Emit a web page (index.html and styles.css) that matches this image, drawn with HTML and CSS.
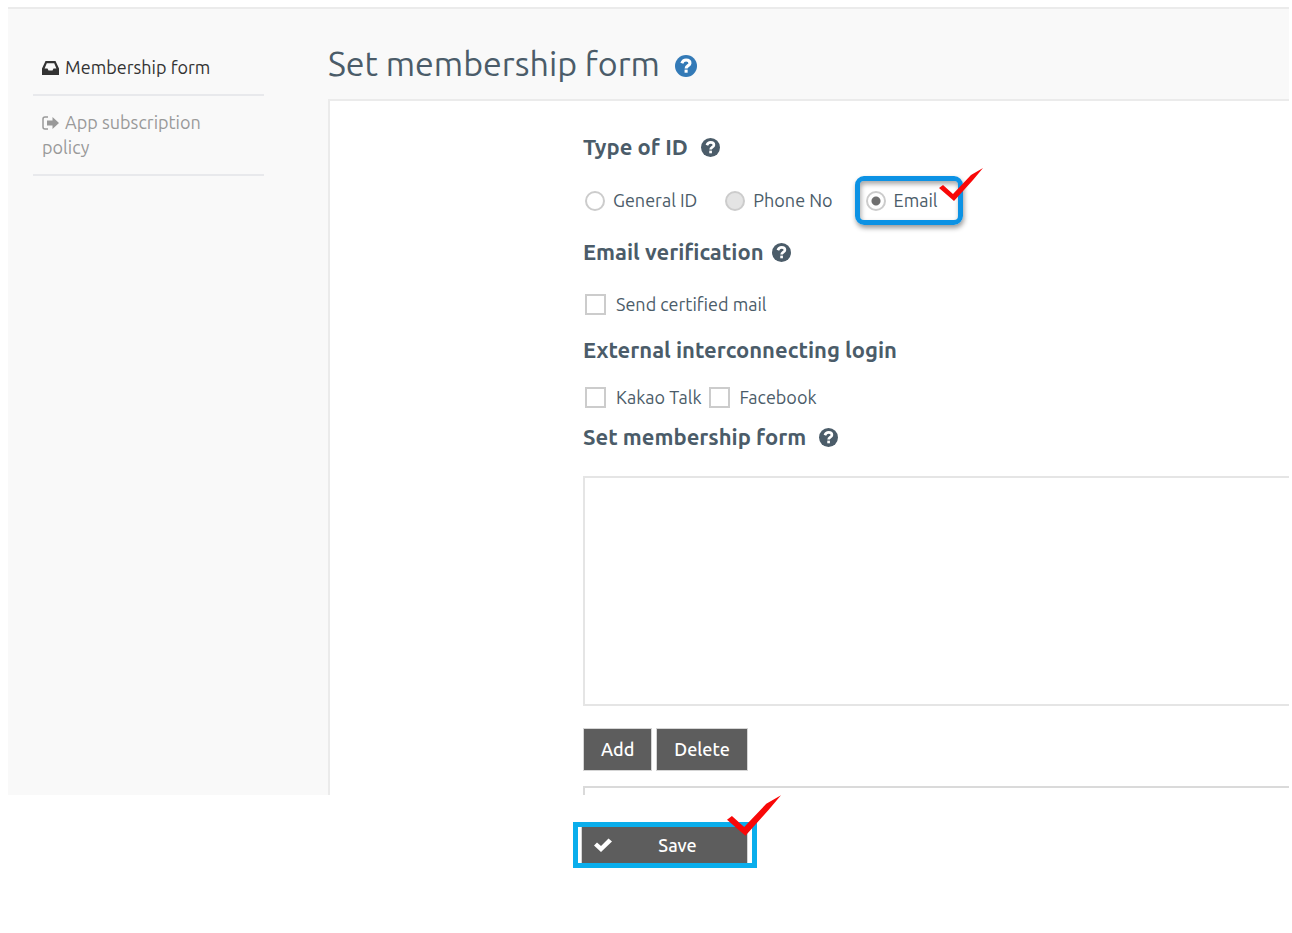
FILE: index.html
```html
<!DOCTYPE html>
<html lang="en">
  <head>
    <meta charset="UTF-8" />
    <meta name="viewport" content="width=device-width, initial-scale=1.0" />
    <title>Set membership form</title>
    <link rel="stylesheet" href="styles.css">
  </head>
  <body>
    <svg class="sprite" aria-hidden="true">
      <symbol id="help" viewBox="0 0 20 20">
        <circle cx="10" cy="10" r="10" fill="currentColor" />
        <path d="M6.2 7.6C6.900 5.6 8.200 4.600 10.1 4.600C12.200 4.600 13.600 5.8 13.600 7.4C13.600 9.700 10.1 9.600 10.1 12.200" fill="none" stroke="#fff" stroke-width="2.8" />
        <rect x="8.7" y="13.3" width="2.8" height="2.8" fill="#fff" />
      </symbol>
      <symbol id="tick" viewBox="0 0 44 34">
        <path d="M0 20L4 17L14 26L32 7L44 0L34 12L15 33Z" fill="#f80808" />
      </symbol>
    </svg>

    <form>
      <div class="page">
        <nav class="sidebar">
          <a class="menu-item active" href="#form">
            <svg class="menu-icon" viewBox="0 0 17 14">
              <path d="M3.5 0H13.5L17 7.5V14H0V7.5ZM4.8 2.2L2.6 7.500H5.5L6.5 9.5H10.5L11.5 7.500H14.4L12.2 2.2Z" fill="currentColor" fill-rule="evenodd" />
            </svg>
            Membership form
          </a>
          <a class="menu-item" href="#policy">
            <svg class="menu-icon" viewBox="0 0 17 14">
              <path d="M6 1H3Q1 1 1 3V11Q1 13 3 13H6" fill="none" stroke="currentColor" stroke-width="1.5" />
              <path d="M5 4.5H10.5V1L17 7L10.5 13V9.500H5Z" fill="currentColor" />
            </svg>
            App subscription policy
          </a>
        </nav>

        <main class="content">
          <h1>Set membership form <a class="title-help" href="#help" aria-label="Help"><svg><use href="#help" /></svg></a></h1>

          <div class="panel">
            <h2>Type of ID <svg class="help wide"><use href="#help" /></svg></h2>
            <div class="radios">
              <label><input type="radio" name="idType" /> General ID</label>
              <label><input type="radio" name="idType" disabled /> Phone No</label>
              <label class="highlight"><input type="radio" name="idType" checked /> Email
                <svg class="tick"><use href="#tick" /></svg>
              </label>
            </div>

            <h2>Email verification <svg class="help"><use href="#help" /></svg></h2>
            <div class="checks">
              <label><input type="checkbox" /> Send certified mail</label>
            </div>

            <h2>External interconnecting login</h2>
            <div class="checks login">
              <label><input type="checkbox" /> Kakao Talk</label>
              <label><input type="checkbox" /> Facebook</label>
            </div>

            <h2>Set membership form <svg class="help wide"><use href="#help" /></svg></h2>
            <div class="field-list"></div>
            <div class="actions">
              <button type="button">Add</button>
              <button type="button">Delete</button>
            </div>
            <div class="next-box"></div>
          </div>
        </main>
      </div>

      <div class="save-box">
        <button type="submit">
          <svg class="check" viewBox="0 0 18 14"><path d="M0 7.500L3 4.500L7 8L14.500 0.500L18 3.500L7 14Z" fill="#fff" /></svg>
          <span>Save</span>
        </button>
        <svg class="tick big"><use href="#tick" /></svg>
      </div>
    </form>
  </body>
</html>
```
FILE: styles.css
```css
* {
  margin: 0;
  padding: 0;
  box-sizing: border-box;
}

body {
  font-family: Ubuntu, "Noto Sans", sans-serif;
  font-size: 18px;
  line-height: 25px;
  color: #4b5c69;
  background-color: #fff;
}

.sprite {
  display: none;
}

.page {
  display: grid;
  grid-template-columns: 320px 1fr;
  margin: 7px 3px 0 8px;
  border-top: 2px solid #ebebeb;
  background-color: #f9f9f9;
}

.sidebar {
  padding: 32px 64px 0 25px;
}

.menu-item {
  display: block;
  padding: 14px 40px 14px 9px;
  border-bottom: 2px solid #e8e9ec;
  color: #999;
  text-decoration: none;
}

.menu-item.active {
  color: #333;
}

.menu-icon {
  width: 17px;
  height: 14px;
  margin-right: 2px;
  vertical-align: -1px;
}

.content {
  padding-top: 34px;
}

h1 {
  display: flex;
  align-items: center;
  gap: 15px;
  margin-bottom: 16px;
  font-size: 34px;
  font-weight: 400;
  line-height: 40px;
}

.title-help {
  display: flex;
  margin-top: 6px;
  color: #337ab7;
}

.title-help svg {
  width: 22px;
  height: 22px;
}

.panel {
  padding: 32px 0 0 253px;
  border: solid #ebebeb;
  border-width: 2px 0 0 2px;
  background-color: #fff;
}

h2 {
  display: flex;
  align-items: center;
  gap: 8px;
  font-size: 22px;
  font-weight: 700;
  line-height: 28px;
}

.help {
  width: 19px;
  height: 19px;
}

.help.wide {
  margin-left: 5px;
}

label {
  display: flex;
  align-items: center;
  gap: 8px;
}

.radios {
  display: flex;
  align-items: center;
  margin: 15px 0 13px;
  padding-left: 2px;
  gap: 28px;
}

.highlight {
  position: relative;
  height: 49px;
  margin-left: -6px;
  padding: 0 20px 0 6px;
  border: 5px solid #0c92e4;
  border-radius: 9px;
  box-shadow: 1px 3px 5px rgba(0, 0, 0, 0.4), inset 1px 3px 5px rgba(0, 0, 0, 0.35);
}

input {
  appearance: none;
  flex: none;
  border: 2px solid #ccc;
  background-color: #fff;
}

input[type="radio"] {
  width: 20px;
  height: 20px;
  border-radius: 50%;
}

input[type="radio"]:disabled {
  background-color: #e4e4e4;
}

input[type="radio"]:checked {
  background-image: radial-gradient(circle, #707070 4px, transparent 5px);
}

input[type="checkbox"] {
  width: 21px;
  height: 21px;
}

.checks {
  display: flex;
  gap: 7px;
  height: 22px;
  margin: 27px 0 21px;
  padding-left: 2px;
}

.checks label {
  gap: 10px;
}

.checks.login {
  margin: 22px 0 15px;
}

.field-list {
  height: 230px;
  margin-top: 25px;
  border: solid #e5e5e5;
  border-width: 2px 0 2px 2px;
}

.actions {
  display: flex;
  gap: 4px;
  margin: 22px 0 15px;
}

button {
  border: 1px solid #d5d5d5;
  background-color: #5d5d5d;
  color: #fff;
  font: inherit;
  font-weight: 500;
  cursor: pointer;
}

.actions button {
  height: 43px;
  padding: 0 17px;
}

.next-box {
  height: 9px;
  border: solid #dadada;
  border-width: 2px 0 0 2px;
}

.save-box {
  position: relative;
  width: 184px;
  margin: 27px 0 0 573px;
  padding: 0 4px 0 3px;
  border: 5px solid #0aaeec;
}

.save-box button {
  display: flex;
  align-items: center;
  width: 100%;
  height: 36px;
  padding: 0 12px;
  border-width: 0 1px;
}

.save-box span {
  flex: 1;
  padding-left: 8px;
  text-align: center;
}

.check {
  width: 18px;
  height: 14px;
}

/* red ticks over the highlighted controls */
.tick {
  position: absolute;
  top: -13px;
  right: -25px;
  width: 44px;
  height: 34px;
}

.tick.big {
  top: -33px;
  right: -29px;
  width: 54px;
  height: 44px;
}
```
